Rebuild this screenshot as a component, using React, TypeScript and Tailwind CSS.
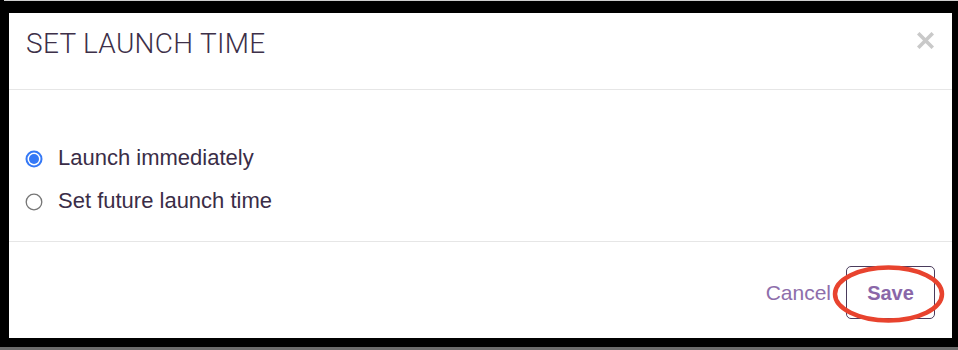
import React from 'react'

function Radio({ checked }: { checked: boolean }) {
  if (checked) {
    return (
      <svg width="18" height="18" viewBox="0 0 18 18" className="shrink-0">
        <circle cx="9" cy="9" r="8.5" fill="#3478f6" />
        <circle cx="9" cy="9" r="6.5" fill="#ffffff" />
        <circle cx="9" cy="9" r="5" fill="#3478f6" />
      </svg>
    )
  }
  return (
    <svg width="18" height="18" viewBox="0 0 18 18" className="shrink-0">
      <circle cx="9" cy="9" r="7.8" fill="#ffffff" stroke="#767676" strokeWidth="1.3" />
    </svg>
  )
}

export default function App() {
  const options = [
    { label: 'Launch immediately', checked: true },
    { label: 'Set future launch time', checked: false },
  ]

  return (
    <div className="relative w-[958px] h-[350px] bg-black flex flex-col overflow-hidden">
      <div className="h-px ml-[4px] bg-[#cfcfcf] shrink-0" />
      <div className="h-[12px] shrink-0" />

      {/* modal */}
      <div className="ml-[9px] w-[943px] h-[325px] bg-white flex flex-col shrink-0">
        {/* header */}
        <div className="h-[77px] flex justify-between items-start pl-[17px] pr-[18px] pt-[15px] border-b border-[#e6e6e6] shrink-0">
          <h2 className="text-[28px] leading-[32px] font-light tracking-[0.3px] text-[#3d3049] font-['Roboto',sans-serif]">
            SET LAUNCH TIME
          </h2>
          <svg width="17" height="17" viewBox="0 0 17 17" className="mt-[4px]">
            <path d="M2.5 2.5 L14.5 14.5 M14.5 2.5 L2.5 14.5" stroke="#c9c9c9" strokeWidth="3.6" strokeLinecap="square" />
          </svg>
        </div>

        {/* body */}
        <div className="h-[152px] flex flex-col gap-[13px] pt-[54px] pl-[16px] border-b border-[#e6e6e6] shrink-0">
          {options.map((o) => (
            <label key={o.label} className="h-[30px] flex items-center gap-[15px]">
              <Radio checked={o.checked} />
              <span className="text-[22px] leading-[30px] text-[#3a2d47] font-['Liberation_Sans',Arial,sans-serif] -mt-[3px]">
                {o.label}
              </span>
            </label>
          ))}
        </div>

        {/* footer */}
        <div className="flex-1 flex justify-end items-start pt-[24px] pr-[17px] gap-[15px] font-['Liberation_Sans',Arial,sans-serif]">
          <span className="h-[53px] flex items-center text-[21px] text-[#8e6eab]">Cancel</span>
          <button className="w-[89px] h-[53px] border border-[#4a3b5c] rounded-[5px] text-[20px] font-bold text-[#8a67a8] flex items-center justify-center">
            Save
          </button>
        </div>
      </div>

      <div className="h-[9px] shrink-0" />
      <div className="flex-1 bg-[#6b6b6b]" />

      {/* annotation */}
      <svg width="115" height="62" viewBox="0 0 115 62" className="absolute left-[831px] top-[263px]">
        <ellipse cx="57.5" cy="31" rx="53.5" ry="26.5" fill="none" stroke="#e8432e" strokeWidth="4.5" />
      </svg>
    </div>
  )
}
